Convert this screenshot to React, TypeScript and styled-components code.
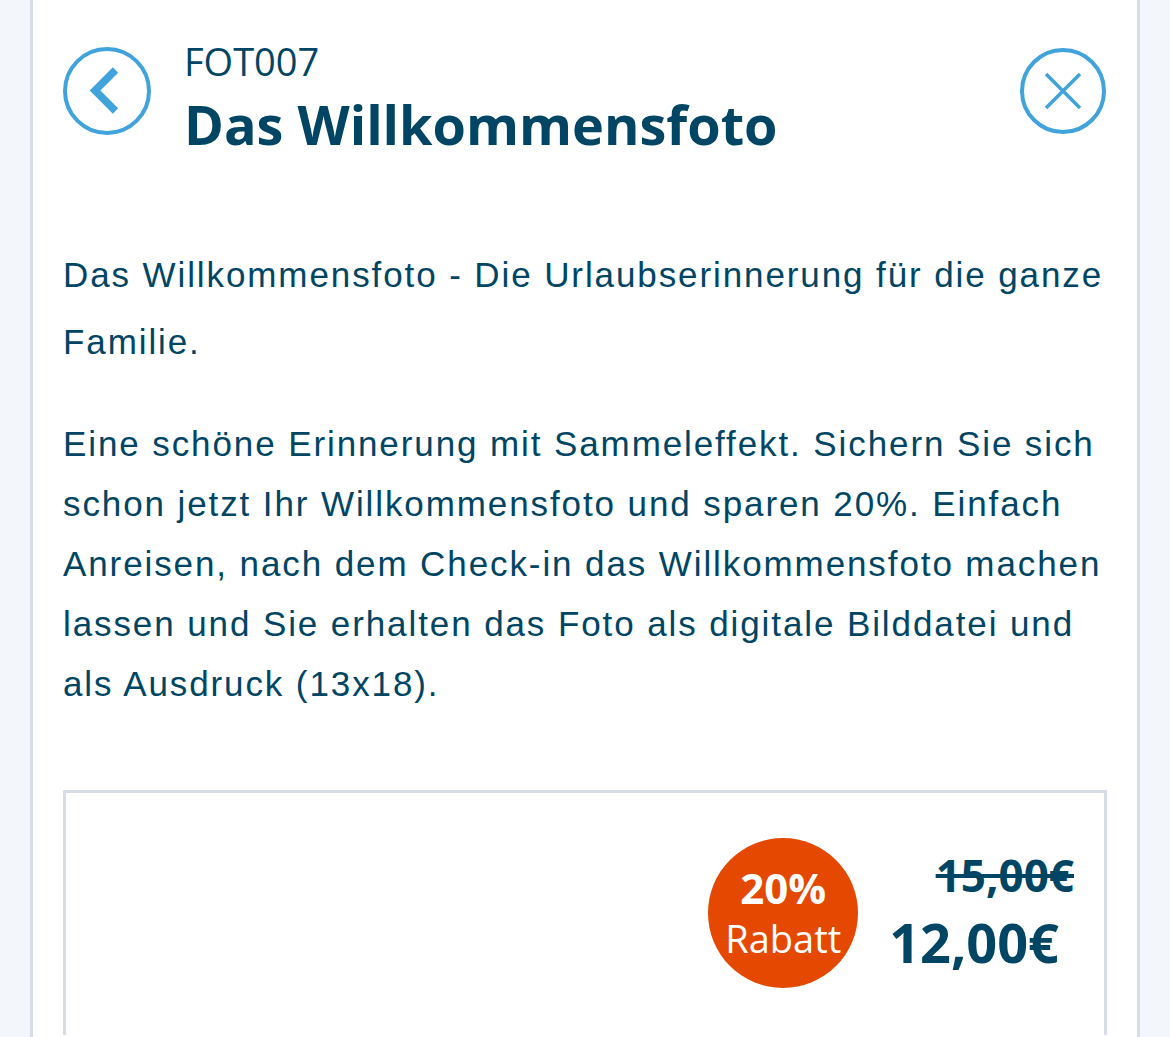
import React from 'react';
import styled, { createGlobalStyle } from 'styled-components';

const GlobalStyle = createGlobalStyle`
  body {
    margin: 0;
    background: #f3f7fc;
  }
`;

const Panel = styled.div`
  margin: 0 30px;
  min-height: 1037px;
  box-sizing: border-box;
  background: #ffffff;
  border-left: 3px solid #d8dbe8;
  border-right: 3px solid #d8dbe8;
  padding: 0 30px;
  color: #004664;
`;

const Header = styled.div`
  display: flex;
  align-items: flex-start;
  padding-top: 47px;
`;

const IconButton = styled.button`
  width: 88px;
  height: 88px;
  padding: 0;
  border: none;
  background: none;
  flex-shrink: 0;
  cursor: pointer;
  display: block;
`;

const HeaderText = styled.div`
  flex: 1;
  margin: -9px 0 0 33px;
  font-family: 'Open Sans', sans-serif;
`;

const Code = styled.div`
  font-size: 38px;
  line-height: 46px;
`;

const Title = styled.h1`
  margin: 6px 0 0;
  font-size: 54px;
  line-height: 68px;
  font-weight: 700;
`;

const Text = styled.p<{ $lh: number; $mt: number }>`
  margin: ${(p) => p.$mt}px -10px 0 0;
  font-family: 'Liberation Sans', Arial, sans-serif;
  font-size: 35px;
  letter-spacing: 1.9px;
  line-height: ${(p) => p.$lh}px;
`;

const PriceBox = styled.div`
  box-sizing: border-box;
  height: 245px;
  margin-top: 76px;
  border: 3px solid #d8dbe8;
  border-bottom: none;
  display: flex;
  justify-content: flex-end;
  align-items: flex-start;
  padding: 45px 30px 0 0;
  gap: 31px;
  font-family: 'Open Sans', sans-serif;
`;

const Badge = styled.div`
  width: 150px;
  height: 150px;
  border-radius: 50%;
  background: #e54800;
  color: #ffffff;
  display: flex;
  flex-direction: column;
  align-items: center;
  justify-content: center;
`;

const BadgeValue = styled.div`
  font-size: 42px;
  line-height: 46px;
  font-weight: 700;
`;

const BadgeLabel = styled.div`
  font-size: 38px;
  line-height: 46px;
  margin-top: 4px;
`;

const Prices = styled.div`
  display: flex;
  flex-direction: column;
  align-items: flex-end;
  padding-top: 12px;
  font-weight: 700;
`;

const OldPrice = styled.div`
  font-size: 44px;
  line-height: 50px;
  text-decoration: line-through;
`;

const NewPrice = styled.div`
  font-size: 54px;
  line-height: 62px;
  margin: 11px 15px 0 0;
`;

const BackIcon = () => (
  <svg width="88" height="88" viewBox="0 0 88 88">
    <circle cx="44" cy="44" r="42" fill="none" stroke="#40a3dc" strokeWidth="4" />
    <polyline points="52.5,23 32,43.5 52.5,64" fill="none" stroke="#40a3dc" strokeWidth="7.5" />
  </svg>
);

const CloseIcon = () => (
  <svg width="88" height="88" viewBox="0 0 88 88">
    <circle cx="44" cy="44" r="41" fill="none" stroke="#40a3dc" strokeWidth="4" />
    <path d="M27 27 L61 61 M61 27 L27 61" fill="none" stroke="#40a3dc" strokeWidth="3.5" />
  </svg>
);

const App: React.FC = () => {
  return (
    <>
      <GlobalStyle />
      <Panel>
        <Header>
          <IconButton aria-label="Zurück">
            <BackIcon />
          </IconButton>
          <HeaderText>
            <Code>FOT007</Code>
            <Title>Das Willkommensfoto</Title>
          </HeaderText>
          <IconButton aria-label="Schließen">
            <CloseIcon />
          </IconButton>
        </Header>
        <Text $lh={67} $mt={83}>
          Das Willkommensfoto - Die Urlaubserinnerung für die ganze Familie.
        </Text>
        <Text $lh={60} $mt={39}>
          Eine schöne Erinnerung mit Sammeleffekt. Sichern Sie sich schon jetzt Ihr Willkommensfoto und sparen
          20%. Einfach Anreisen, nach dem Check-in das Willkommensfoto machen lassen und Sie erhalten das Foto
          als digitale Bilddatei und als Ausdruck (13x18).
        </Text>
        <PriceBox>
          <Badge>
            <BadgeValue>20%</BadgeValue>
            <BadgeLabel>Rabatt</BadgeLabel>
          </Badge>
          <Prices>
            <OldPrice>15,00€</OldPrice>
            <NewPrice>12,00€</NewPrice>
          </Prices>
        </PriceBox>
      </Panel>
    </>
  );
};

export default App;
